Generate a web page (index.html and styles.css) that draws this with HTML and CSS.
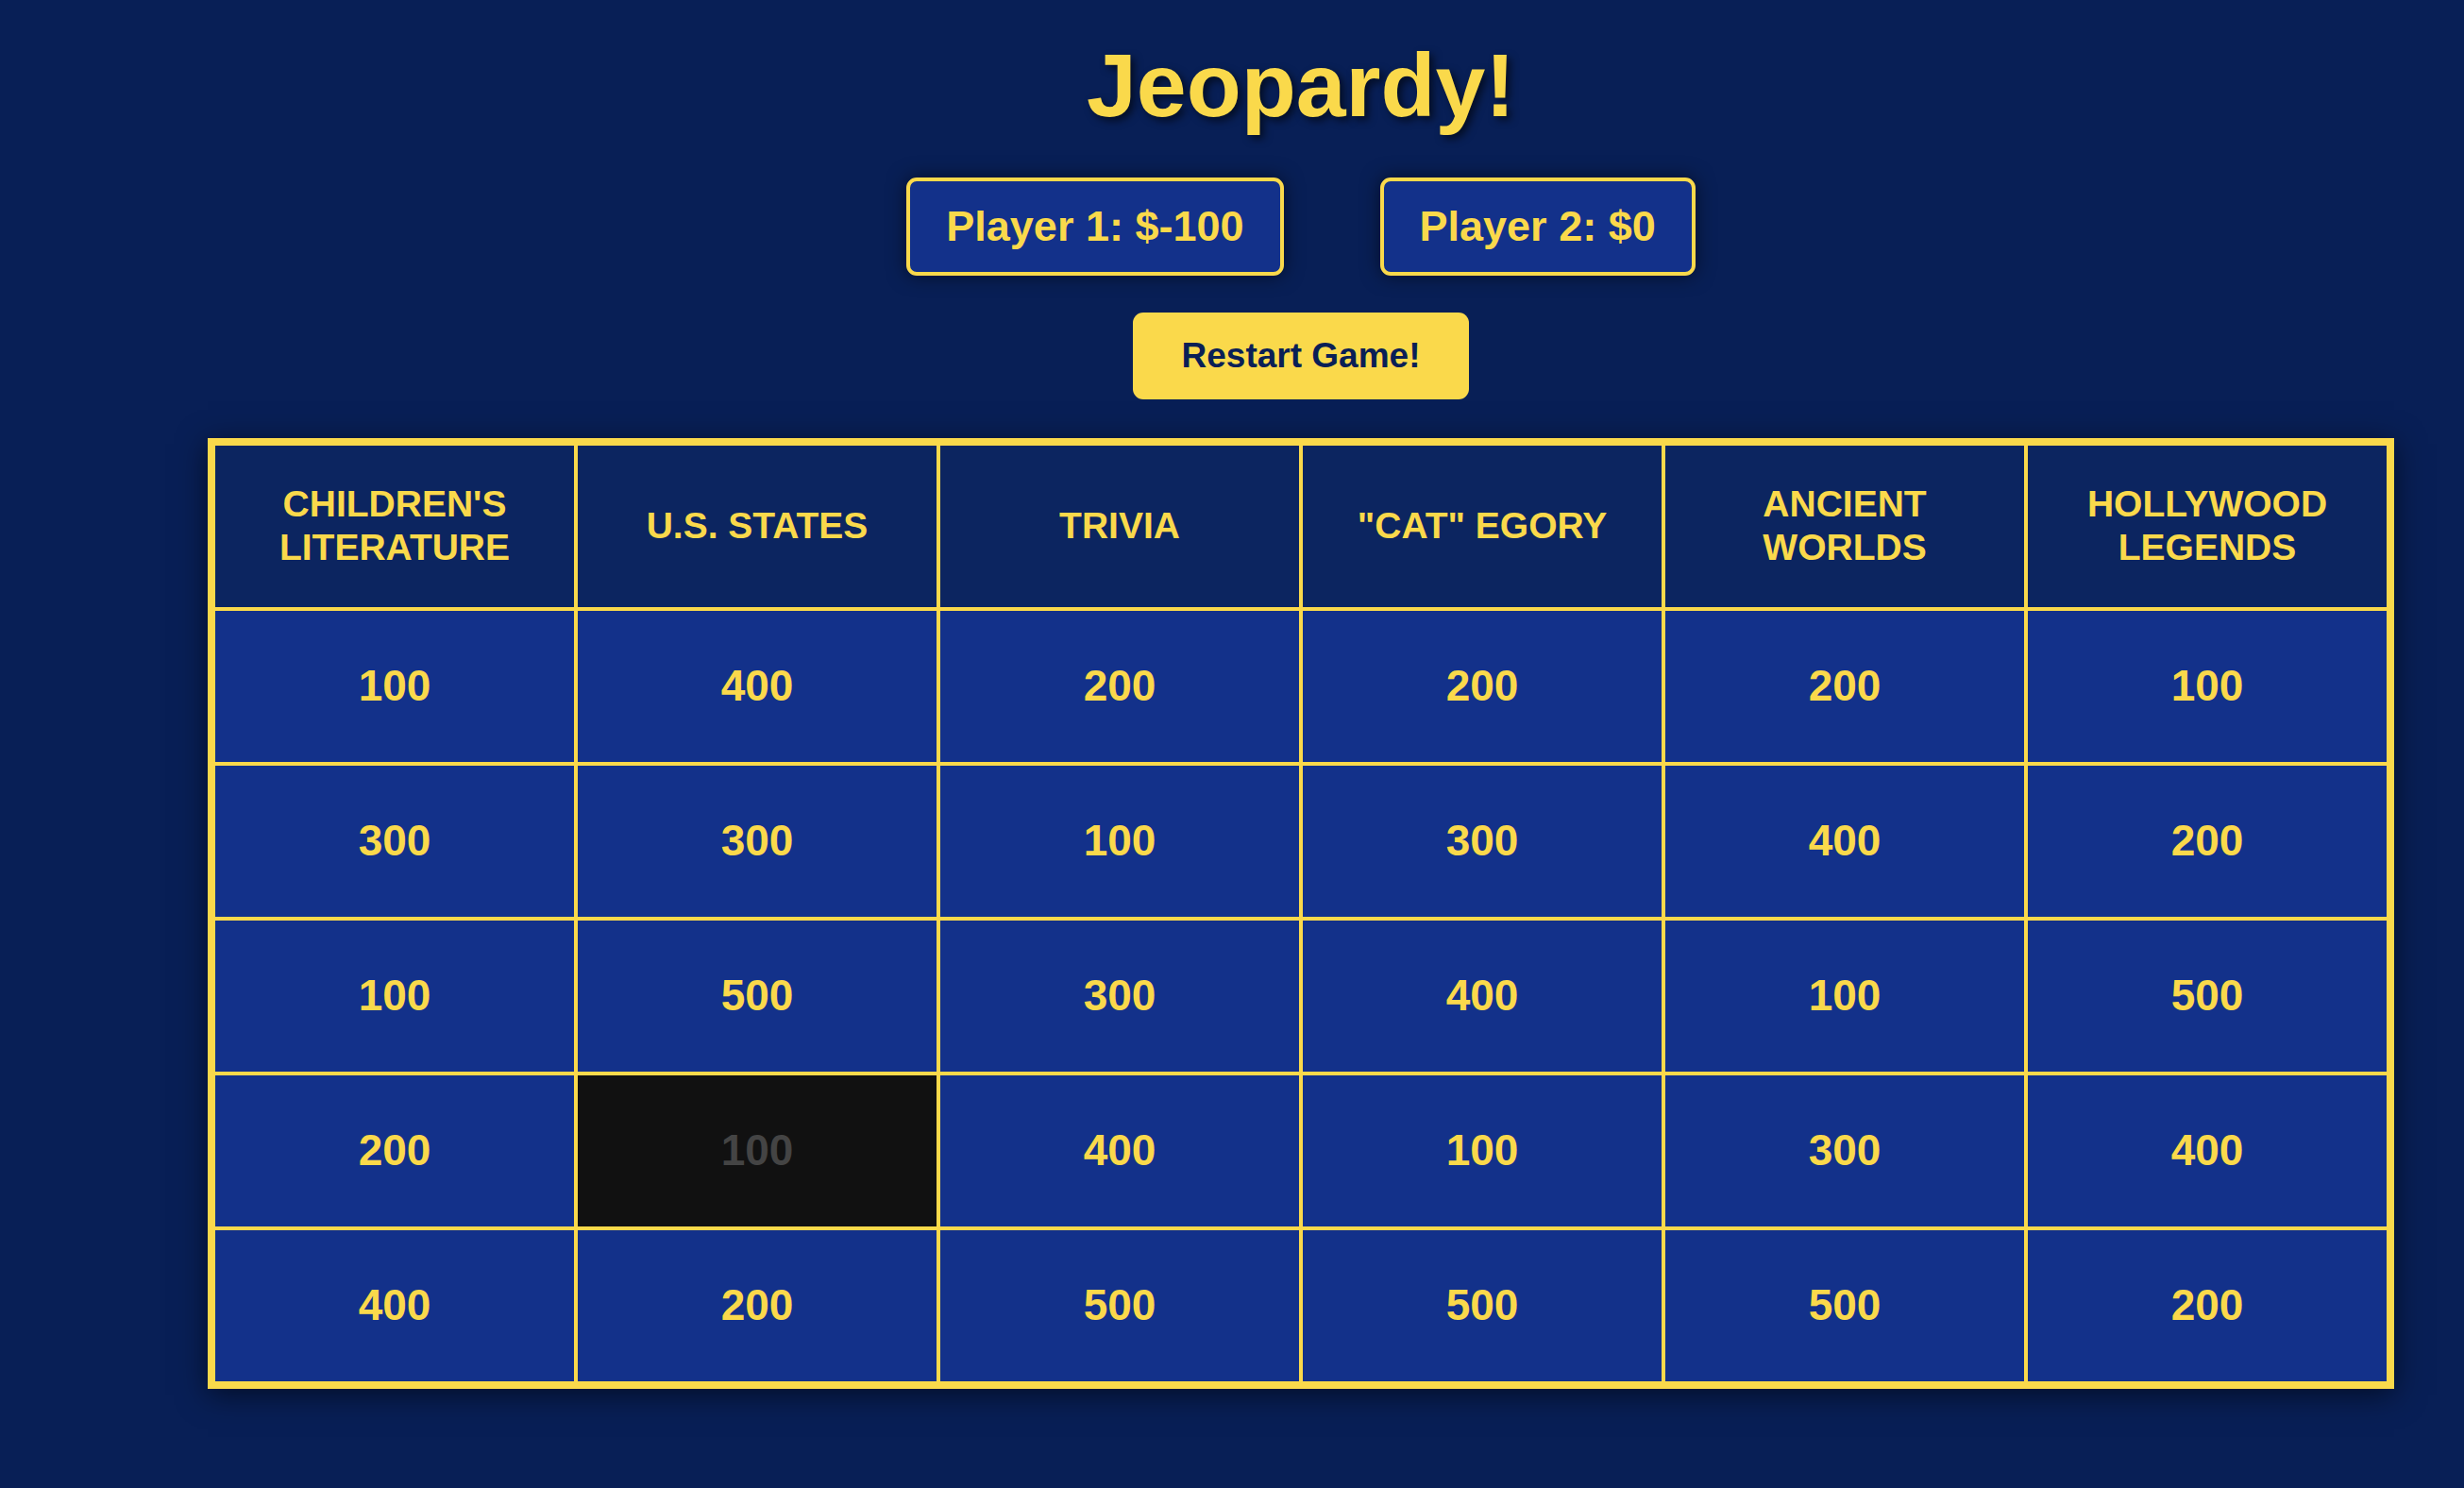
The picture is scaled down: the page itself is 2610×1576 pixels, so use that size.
FILE: index.html
```html
<!DOCTYPE html>
<html>
<head>
	<meta charset="UTF-8">
	<title>Jeopardy!</title>
	<link rel="stylesheet" href="styles.css">
</head>
<body>

	<div class="game">
		<h1 class="title">Jeopardy!</h1>

		<div class="scores">
			<div class="score">Player 1: $-100</div>
			<div class="score">Player 2: $0</div>
		</div>

		<button class="restart" type="button">Restart Game!</button>

		<div class="board">
			<div class="category">CHILDREN'S LITERATURE</div>
			<div class="category">U.S. STATES</div>
			<div class="category">TRIVIA</div>
			<div class="category">"CAT" EGORY</div>
			<div class="category">ANCIENT WORLDS</div>
			<div class="category">HOLLYWOOD LEGENDS</div>

			<div class="clue">100</div>
			<div class="clue">400</div>
			<div class="clue">200</div>
			<div class="clue">200</div>
			<div class="clue">200</div>
			<div class="clue">100</div>

			<div class="clue">300</div>
			<div class="clue">300</div>
			<div class="clue">100</div>
			<div class="clue">300</div>
			<div class="clue">400</div>
			<div class="clue">200</div>

			<div class="clue">100</div>
			<div class="clue">500</div>
			<div class="clue">300</div>
			<div class="clue">400</div>
			<div class="clue">100</div>
			<div class="clue">500</div>

			<div class="clue">200</div>
			<div class="clue used">100</div>
			<div class="clue">400</div>
			<div class="clue">100</div>
			<div class="clue">300</div>
			<div class="clue">400</div>

			<div class="clue">400</div>
			<div class="clue">200</div>
			<div class="clue">500</div>
			<div class="clue">500</div>
			<div class="clue">500</div>
			<div class="clue">200</div>
		</div>
	</div>

</body>
</html>
```

FILE: styles.css
```css
* {
	margin: 0;
	padding: 0;
	box-sizing: border-box;
}
body {
	min-height: 100vh;
	background: #081f56;
	font-family: "Liberation Sans", Helvetica, Arial, sans-serif;
	font-weight: bold;
	color: #fad94b;
}
.game {
	display: flex;
	flex-direction: column;
	align-items: center;
	padding: 35px 0 0 146px;
}
.title {
	font-size: 95px;
	line-height: 1.16;
	color: #fad94b;
	text-shadow: 4px 4px 8px rgba(0, 0, 0, .6);
}
.scores {
	display: flex;
	gap: 102px;
	margin-top: 43px;
}
.score {
	padding: 22px 38px;
	font-size: 45px;
	line-height: 1.15;
	background: #13318a;
	border: 4px solid #fad94b;
	border-radius: 11px;
	box-shadow: 0 0 20px rgba(0, 0, 0, .55);
}
.restart {
	margin-top: 39px;
	padding: 24px 52px;
	font-family: inherit;
	font-weight: bold;
	font-size: 37px;
	line-height: 1.18;
	color: #0a1f56;
	background: #fad94b;
	border: none;
	border-radius: 11px;
	cursor: pointer;
}
.board {
	display: grid;
	grid-template-columns: repeat(6, 1fr);
	grid-template-rows: 171px repeat(5, 160px);
	gap: 4px;
	width: 2316px;
	margin-top: 41px;
	background: #fad94b;
	border: 8px solid #fad94b;
	box-shadow: 0 6px 30px rgba(0, 0, 0, .55);
}
.category,
.clue {
	display: flex;
	align-items: center;
	justify-content: center;
	text-align: center;
}
.category {
	padding: 0 36px;
	font-size: 39px;
	line-height: 1.19;
	background: #0c2560;
}
.clue {
	font-size: 46px;
	line-height: 1.15;
	background: #13318a;
	cursor: pointer;
}
.clue.used {
	background: #111;
	color: #444;
	cursor: default;
}
```
